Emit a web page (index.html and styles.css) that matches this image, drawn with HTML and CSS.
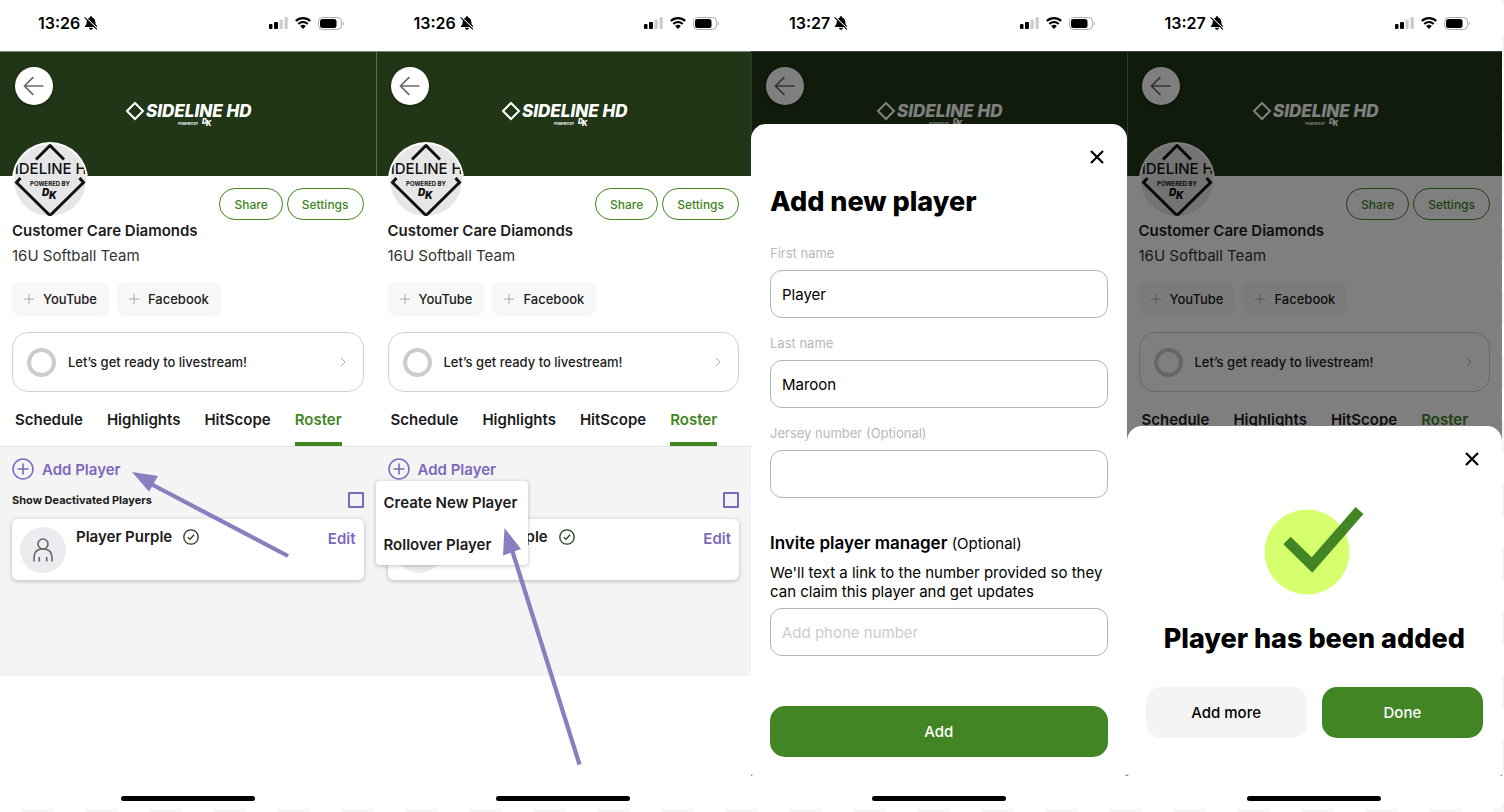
FILE: index.html
```html
<!DOCTYPE html>
<html lang="en">
<head>
    <meta charset="UTF-8">
    <meta name="viewport" content="width=device-width, initial-scale=1.0">
    <title>Add a Player to the Roster</title>
    <link rel="stylesheet" href="styles.css">
</head>
<body>

    <svg class="clip-defs" aria-hidden="true">
        <clipPath id="team-clip"><circle cx="38" cy="38" r="36"/></clipPath>
    </svg>

    <!-- Shared icons -->
    <svg class="icon-defs" aria-hidden="true">
        <symbol id="icon-bell" viewBox="0 0 14 14">
            <path d="M7 .3c-.7 0-1.200.5-1.200 1.100C3.700 2 2.700 3.700 2.700 5.700c0 2.600-.9 3.300-1.700 4.300-.4.500 0 1 .5 1h11c.5 0 .9-.5.5-1-.8-1-1.700-1.700-1.700-4.300 0-2-1-3.700-3.100-4.300 0-.6-.5-1.100-1.200-1.100zM5 11.700a2 2 0 0 0 4 0z" fill="#000"/>
            <path d="M1.500 1.200L13.500 12.700" stroke="#fff" stroke-width="1.200"/>
            <path d="M.6 1.300L12.900 13.300" stroke="#000" stroke-width="1.100"/>
        </symbol>
        <symbol id="icon-signal" viewBox="0 0 19 12">
            <rect x="0" y="7" width="3.500" height="5" rx="1" fill="#000"/>
            <rect x="5" y="5" width="4" height="7" rx="1" fill="#000"/>
            <rect x="10.500" y="2.500" width="3.200" height="9.500" rx="1" fill="#ccc"/>
            <rect x="15.500" y="0" width="3.300" height="12" rx="1" fill="#ccc"/>
        </symbol>
        <symbol id="icon-wifi" viewBox="0 0 16 12">
            <path d="M.8 4.100a10.200 10.200 0 0 1 14.400 0M3.300 6.900a6.700 6.700 0 0 1 9.400 0" fill="none" stroke="#000" stroke-width="2.100"/>
            <path d="M5.200 9a4 4 0 0 1 5.600 0L8 11.900z" fill="#000"/>
        </symbol>
        <symbol id="icon-battery" viewBox="0 0 26 13">
            <rect x=".5" y=".5" width="23" height="12" rx="4" fill="none" stroke="#aaa"/>
            <rect x="2" y="2" width="16.500" height="9" rx="2.500" fill="#000"/>
            <path d="M24.700 4.500c1.400.5 1.400 3.500 0 4z" fill="#aaa"/>
        </symbol>
        <symbol id="icon-back" viewBox="0 0 22 20">
            <path d="M20.500 10H1.500M10.300 1.200L1.500 10l8.800 8.800" fill="none" stroke="#6b6b6b" stroke-width="1.700"/>
        </symbol>
        <symbol id="brand-logo" viewBox="0 0 126 28">
            <path d="M9 2L17 10 9 18 1 10z" fill="none" stroke="#fff" stroke-width="2"/>
            <text x="20" y="16" class="logo-word">SIDELINE HD</text>
            <text x="52" y="24" class="logo-powered">POWERED BY</text>
            <text x="76" y="23" class="logo-dk">D</text>
            <text x="80" y="25" class="logo-dk">K</text>
        </symbol>
        <symbol id="team-logo" viewBox="0 0 76 76">
            <circle cx="38" cy="38" r="38" fill="#fff"/>
            <circle cx="38" cy="38" r="36" fill="#e6e6e6"/>
            <g clip-path="url(#team-clip)">
                <path d="M24 17.500L38 3.500l14 14M8.500 36L4.500 40.500 38 73.500 71.500 40.500 67.500 36" fill="none" stroke="#111" stroke-width="3"/>
                <text x="-7" y="32" class="team-word">SIDELINE HD</text>
                <text x="38" y="44" class="team-powered">POWERED BY</text>
                <text x="30" y="54" class="team-dk">D</text>
                <text x="37" y="57" class="team-dk">K</text>
            </g>
        </symbol>
        <symbol id="icon-plus" viewBox="0 0 10 10">
            <path d="M5 0v10M0 5h10" stroke="#aaa" stroke-width="1"/>
        </symbol>
        <symbol id="icon-chevron" viewBox="0 0 6 10">
            <path d="M1 1l4 4-4 4" fill="none" stroke="#aaa" stroke-width="1"/>
        </symbol>
        <symbol id="icon-add" viewBox="0 0 22 22">
            <path d="M11 5.500v11M5.500 11h11" stroke="#7c68bd" stroke-width="1.600"/>
            <circle cx="11" cy="11" r="10" fill="none" stroke="#7c68bd" stroke-width="1.500"/>
        </symbol>
        <symbol id="icon-person" viewBox="0 0 46 46">
            <circle cx="23" cy="23" r="23" fill="#ebebf0"/>
            <circle cx="23" cy="17" r="5" fill="none" stroke="#666" stroke-width="1.600"/>
            <path d="M14 34.500v-4c0-5 3-8.500 9-8.500s9 3.500 9 8.500v4M19.300 30v4.500M26.700 30v4.500" fill="none" stroke="#666" stroke-width="1.600"/>
        </symbol>
        <symbol id="icon-verified" viewBox="0 0 16 16">
            <circle cx="8" cy="8" r="7.200" fill="none" stroke="#223817" stroke-width="1.300"/>
            <path d="M4.800 8.300l2.200 2.100 4-4.600" fill="none" stroke="#223817" stroke-width="1.300"/>
        </symbol>
        <symbol id="icon-close" viewBox="0 0 14 14">
            <path d="M1 1l12 12M13 1L1 13" stroke="#000" stroke-width="2.200"/>
        </symbol>
    </svg>

    <main class="phones">

        <!-- Step 1: roster tab -->
        <section class="phone">
            <div class="status-bar">
                <span class="time">13:26</span>
                <svg class="bell"><use href="#icon-bell"/></svg>
                <svg class="signal"><use href="#icon-signal"/></svg>
                <svg class="wifi"><use href="#icon-wifi"/></svg>
                <svg class="battery"><use href="#icon-battery"/></svg>
            </div>
            <div class="screen">
                <header class="hero">
                    <button class="back-btn" aria-label="Back"><svg><use href="#icon-back"/></svg></button>
                    <svg class="brand"><use href="#brand-logo"/></svg>
                </header>
                <div class="profile">
                    <svg class="avatar"><use href="#team-logo"/></svg>
                    <div class="profile-actions">
                        <button class="pill">Share</button>
                        <button class="pill">Settings</button>
                    </div>
                </div>
                <div class="team">
                    <h2>Customer Care Diamonds</h2>
                    <p>16U Softball Team</p>
                    <div class="chips">
                        <button class="chip"><svg><use href="#icon-plus"/></svg>YouTube</button>
                        <button class="chip"><svg><use href="#icon-plus"/></svg>Facebook</button>
                    </div>
                    <a class="ready" href="#livestream"><span class="ring"></span>Let’s get ready to livestream!<svg><use href="#icon-chevron"/></svg></a>
                </div>
                <nav class="tabs">
                    <a href="#schedule">Schedule</a>
                    <a href="#highlights">Highlights</a>
                    <a href="#hitscope">HitScope</a>
                    <a class="active" href="#roster">Roster</a>
                </nav>
                <div class="roster">
                    <button class="add-player"><svg><use href="#icon-add"/></svg>Add Player</button>
                    <div class="deactivated">
                        <label for="deactivated1">Show Deactivated Players</label>
                        <input type="checkbox" id="deactivated1">
                    </div>
                    <div class="player">
                        <svg class="player-photo"><use href="#icon-person"/></svg>
                        <span class="player-name">Player Purple</span>
                        <svg class="verified"><use href="#icon-verified"/></svg>
                        <a class="edit" href="#edit">Edit</a>
                    </div>
                </div>
                <svg class="arrow arrow-add" viewBox="0 0 158 86">
                    <path d="M19 12L156 84" stroke="#8b7dbf" stroke-width="4.200"/>
                    <path d="M0 0l26 4-9 15.500z" fill="#8b7dbf"/>
                </svg>
            </div>
            <div class="home-bar"></div>
        </section>

        <!-- Step 2: add player menu -->
        <section class="phone">
            <div class="status-bar">
                <span class="time">13:26</span>
                <svg class="bell"><use href="#icon-bell"/></svg>
                <svg class="signal"><use href="#icon-signal"/></svg>
                <svg class="wifi"><use href="#icon-wifi"/></svg>
                <svg class="battery"><use href="#icon-battery"/></svg>
            </div>
            <div class="screen">
                <header class="hero">
                    <button class="back-btn" aria-label="Back"><svg><use href="#icon-back"/></svg></button>
                    <svg class="brand"><use href="#brand-logo"/></svg>
                </header>
                <div class="profile">
                    <svg class="avatar"><use href="#team-logo"/></svg>
                    <div class="profile-actions">
                        <button class="pill">Share</button>
                        <button class="pill">Settings</button>
                    </div>
                </div>
                <div class="team">
                    <h2>Customer Care Diamonds</h2>
                    <p>16U Softball Team</p>
                    <div class="chips">
                        <button class="chip"><svg><use href="#icon-plus"/></svg>YouTube</button>
                        <button class="chip"><svg><use href="#icon-plus"/></svg>Facebook</button>
                    </div>
                    <a class="ready" href="#livestream"><span class="ring"></span>Let’s get ready to livestream!<svg><use href="#icon-chevron"/></svg></a>
                </div>
                <nav class="tabs">
                    <a href="#schedule">Schedule</a>
                    <a href="#highlights">Highlights</a>
                    <a href="#hitscope">HitScope</a>
                    <a class="active" href="#roster">Roster</a>
                </nav>
                <div class="roster">
                    <button class="add-player"><svg><use href="#icon-add"/></svg>Add Player</button>
                    <div class="add-menu">
                        <button>Create New Player</button>
                        <button>Rollover Player</button>
                    </div>
                    <div class="deactivated">
                        <label for="deactivated2">Show Deactivated Players</label>
                        <input type="checkbox" id="deactivated2">
                    </div>
                    <div class="player">
                        <svg class="player-photo"><use href="#icon-person"/></svg>
                        <span class="player-name">Player Purple</span>
                        <svg class="verified"><use href="#icon-verified"/></svg>
                        <a class="edit" href="#edit">Edit</a>
                    </div>
                </div>
                <svg class="arrow arrow-menu" viewBox="0 0 80 238">
                    <path d="M9 22L76.500 236.500" stroke="#8b7dbf" stroke-width="4.200"/>
                    <path d="M1.500 0l16.500 21-18 6.500z" fill="#8b7dbf"/>
                </svg>
            </div>
            <div class="home-bar"></div>
        </section>

        <!-- Step 3: new player form -->
        <section class="phone">
            <div class="status-bar">
                <span class="time">13:27</span>
                <svg class="bell"><use href="#icon-bell"/></svg>
                <svg class="signal"><use href="#icon-signal"/></svg>
                <svg class="wifi"><use href="#icon-wifi"/></svg>
                <svg class="battery"><use href="#icon-battery"/></svg>
            </div>
            <div class="screen">
                <header class="hero">
                    <button class="back-btn" aria-label="Back"><svg><use href="#icon-back"/></svg></button>
                    <svg class="brand"><use href="#brand-logo"/></svg>
                </header>
                <div class="backdrop">
                    <form class="sheet">
                        <button type="button" class="close-btn" aria-label="Close"><svg><use href="#icon-close"/></svg></button>
                        <h1>Add new player</h1>
                        <div class="field">
                            <label for="firstName">First name</label>
                            <input type="text" id="firstName" value="Player">
                        </div>
                        <div class="field">
                            <label for="lastName">Last name</label>
                            <input type="text" id="lastName" value="Maroon">
                        </div>
                        <div class="field">
                            <label for="jersey">Jersey number (Optional)</label>
                            <input type="text" id="jersey">
                        </div>
                        <div class="invite">
                            <label for="phone"><strong>Invite player manager</strong> (Optional)</label>
                            <p>We'll text a link to the number provided so they can claim this player and get updates</p>
                            <input type="tel" id="phone" placeholder="Add phone number">
                        </div>
                        <button type="button" class="btn btn-green">Add</button>
                    </form>
                </div>
            </div>
            <div class="home-bar"></div>
        </section>

        <!-- Step 4: confirmation -->
        <section class="phone">
            <div class="status-bar">
                <span class="time">13:27</span>
                <svg class="bell"><use href="#icon-bell"/></svg>
                <svg class="signal"><use href="#icon-signal"/></svg>
                <svg class="wifi"><use href="#icon-wifi"/></svg>
                <svg class="battery"><use href="#icon-battery"/></svg>
            </div>
            <div class="screen">
                <header class="hero">
                    <button class="back-btn" aria-label="Back"><svg><use href="#icon-back"/></svg></button>
                    <svg class="brand"><use href="#brand-logo"/></svg>
                </header>
                <div class="profile">
                    <svg class="avatar"><use href="#team-logo"/></svg>
                    <div class="profile-actions">
                        <button class="pill">Share</button>
                        <button class="pill">Settings</button>
                    </div>
                </div>
                <div class="team">
                    <h2>Customer Care Diamonds</h2>
                    <p>16U Softball Team</p>
                    <div class="chips">
                        <button class="chip"><svg><use href="#icon-plus"/></svg>YouTube</button>
                        <button class="chip"><svg><use href="#icon-plus"/></svg>Facebook</button>
                    </div>
                    <a class="ready" href="#livestream"><span class="ring"></span>Let’s get ready to livestream!<svg><use href="#icon-chevron"/></svg></a>
                </div>
                <nav class="tabs">
                    <a href="#schedule">Schedule</a>
                    <a href="#highlights">Highlights</a>
                    <a href="#hitscope">HitScope</a>
                    <a class="active" href="#roster">Roster</a>
                </nav>
                <div class="backdrop">
                    <div class="sheet done-sheet">
                        <button class="close-btn" aria-label="Close"><svg><use href="#icon-close"/></svg></button>
                        <svg class="success" viewBox="0 0 100 88">
                            <circle cx="43" cy="45" r="42.500" fill="#d6ff6d"/>
                            <path d="M23 33.500l25 24.500L95.500 3.500" fill="none" stroke="#428524" stroke-width="10.500"/>
                        </svg>
                        <h1>Player has been added</h1>
                        <div class="btn-row">
                            <button class="btn btn-grey">Add more</button>
                            <button class="btn btn-green">Done</button>
                        </div>
                    </div>
                </div>
            </div>
            <div class="home-bar"></div>
        </section>

    </main>
</body>
</html>
```
FILE: styles.css
```css
* {
    box-sizing: border-box;
}

/* The dashed canvas shows along the right and bottom edges */
body {
    margin: 0;
    padding: 0 2px 3px 0;
    font-family: Inter, Arial, sans-serif;
    color: #1c1c1c;
    background:
        repeating-linear-gradient(to right, #fff 0 22px, #f6f6f6 22px 54px, #fff 54px 64px) left bottom / 100% 3px no-repeat,
        repeating-linear-gradient(to bottom, #f6f6f6 0 4px, #fff 4px 36px, #f6f6f6 36px 64px) right top / 2px 100% no-repeat,
        #fff;
}

button {
    font-family: inherit;
    border: none;
    background: none;
    padding: 0;
    color: inherit;
    cursor: pointer;
}

a {
    color: inherit;
    text-decoration: none;
}

h1, h2, p {
    margin: 0;
}

svg {
    display: block;
    flex: none;
}

.icon-defs {
    display: none;
}

.clip-defs {
    position: absolute;
    width: 0;
    height: 0;
}

.phones {
    display: grid;
    grid-template-columns: repeat(4, 1fr);
    min-height: calc(100vh - 3px);
}

.phone {
    display: flex;
    flex-direction: column;
    background: #fff;
    min-width: 0;
}

/* Status bar */
.status-bar {
    display: flex;
    align-items: center;
    height: 51px;
    padding: 0 32px 5px 38px;
    color: #000;
}

.time {
    font-size: 16px;
    font-weight: 600;
    margin-right: 4px;
}

.bell {
    width: 14px;
    height: 14px;
    margin-right: auto;
}

.signal {
    width: 19px;
    height: 12px;
}

.wifi {
    width: 16px;
    height: 12px;
    margin: 0 7px;
}

.battery {
    width: 26px;
    height: 13px;
}

.home-bar {
    height: 33px;
    padding-top: 20px;
}

.home-bar::before {
    content: "";
    display: block;
    width: 134px;
    height: 5px;
    margin: 0 auto;
    border-radius: 3px;
    background: #000;
}

/* Team page */
.screen {
    position: relative;
    flex: 1;
}

.hero {
    display: flex;
    height: 125px;
    padding: 15px;
    background: #213616;
    border-top: 1px solid #7c8676;
}

.phone + .phone .hero {
    border-left: 1px solid #5c6b54;
    padding-left: 14px;
}

.back-btn {
    display: flex;
    align-items: center;
    justify-content: center;
    width: 38px;
    height: 38px;
    border-radius: 50%;
    background: #fff;
    box-shadow: 0 1px 3px rgba(0, 0, 0, 0.4);
}

.back-btn svg {
    width: 22px;
    height: 20px;
}

.brand {
    width: 126px;
    height: 28px;
    margin: 34px auto 0 73px;
}

.logo-word {
    font-size: 17px;
    font-weight: 800;
    font-style: italic;
    fill: #fff;
}

.logo-powered {
    font-size: 3px;
    font-weight: 700;
    font-style: italic;
    fill: #fff;
}

.logo-dk {
    font-size: 7px;
    font-weight: 900;
    font-style: italic;
    fill: #fff;
}

.profile {
    display: flex;
    justify-content: space-between;
    align-items: flex-end;
    height: 44px;
    padding: 0 12px;
}

.avatar {
    width: 76px;
    height: 76px;
    margin-bottom: 2px;
}

.team-word {
    font-size: 15px;
    font-weight: 500;
    fill: #111;
}

.team-powered {
    font-size: 6px;
    font-weight: 700;
    text-anchor: middle;
    fill: #111;
}

.team-dk {
    font-size: 10px;
    font-weight: 900;
    font-style: italic;
    fill: #111;
}

.profile-actions {
    display: flex;
    gap: 4px;
}

.pill {
    height: 32px;
    padding: 0 14px;
    border: 1px solid #428524;
    border-radius: 16px;
    color: #428524;
    font-size: 12px;
    font-weight: 500;
}

.team {
    padding: 1px 12px 0;
}

.team h2 {
    font-size: 15px;
    line-height: 20px;
    font-weight: 600;
}

.team p {
    margin-top: 5px;
    font-size: 15px;
    line-height: 20px;
    color: #333;
}

.chips {
    display: flex;
    gap: 8px;
    margin-top: 16px;
}

.chip {
    display: flex;
    align-items: center;
    gap: 9px;
    height: 34px;
    padding: 0 12px;
    border-radius: 8px;
    background: #f7f7f7;
    font-size: 13px;
    font-weight: 500;
}

.chip svg {
    width: 10px;
    height: 10px;
}

.ready {
    display: flex;
    align-items: center;
    height: 60px;
    margin-top: 16px;
    padding: 0 17px 0 14px;
    border: 1px solid #d2d2d2;
    border-radius: 16px;
    font-size: 13px;
    font-weight: 500;
}

.ready svg {
    width: 6px;
    height: 10px;
    margin-left: auto;
}

.ring {
    width: 29px;
    height: 29px;
    margin-right: 12px;
    border: 4px solid #ccc;
    border-radius: 50%;
}

.tabs {
    display: flex;
    gap: 24px;
    padding: 0 15px;
    border-bottom: 1px solid #e4e4e4;
}

.tabs a {
    height: 54px;
    padding-top: 18px;
    font-size: 15px;
    line-height: 20px;
    font-weight: 600;
}

.tabs .active {
    color: #428524;
    border-bottom: 4px solid #428524;
}

/* Roster */
.roster {
    position: relative;
    height: 229px;
    padding: 11px 12px 0;
    background: #f4f4f4;
}

.add-player {
    display: flex;
    align-items: center;
    gap: 8px;
    color: #7c68bd;
    font-size: 15px;
    font-weight: 600;
}

.add-player svg {
    width: 22px;
    height: 22px;
}

.deactivated {
    display: flex;
    align-items: center;
    justify-content: space-between;
    height: 16px;
    margin-top: 12px;
    font-size: 11px;
    font-weight: 700;
}

.deactivated input {
    appearance: none;
    width: 16px;
    height: 16px;
    margin: 0;
    border: 2px solid #7c68bd;
    border-radius: 1px;
}

.player {
    display: flex;
    align-items: flex-start;
    height: 61px;
    margin-top: 11px;
    padding: 8px;
    border-radius: 6px;
    background: #fff;
    box-shadow: 0 1px 4px rgba(0, 0, 0, 0.25);
}

.player-photo {
    width: 46px;
    height: 46px;
}

.player-name {
    margin: 0 11px 0 10px;
    font-size: 15px;
    line-height: 20px;
    font-weight: 600;
}

.verified {
    width: 16px;
    height: 16px;
    margin-top: 2px;
}

.edit {
    margin: 2px 0 0 auto;
    color: #7c68bd;
    font-size: 15px;
    line-height: 20px;
    font-weight: 600;
}

.add-menu {
    position: absolute;
    left: 0;
    top: 34px;
    width: 152px;
    border-radius: 4px;
    background: #fff;
    box-shadow: 0 1px 4px rgba(0, 0, 0, 0.25);
}

.add-menu button {
    display: block;
    width: 100%;
    height: 42px;
    padding-left: 8px;
    font-size: 15px;
    font-weight: 600;
    text-align: left;
    white-space: nowrap;
}

.arrow {
    position: absolute;
}

.arrow-add {
    left: 132px;
    top: 421px;
    width: 158px;
    height: 86px;
}

.arrow-menu {
    left: 127px;
    top: 477px;
    width: 80px;
    height: 238px;
}

/* Bottom sheets */
.backdrop {
    position: absolute;
    inset: 0;
    display: flex;
    flex-direction: column;
    justify-content: flex-end;
    background: rgba(0, 0, 0, 0.5);
}

.sheet {
    display: flex;
    flex-direction: column;
    padding: 26px 19px 19px;
    border-radius: 15px 15px 3px 3px;
    background: #fff;
    color: #000;
}

.close-btn {
    align-self: flex-end;
    margin-right: 4px;
}

.close-btn svg {
    width: 14px;
    height: 14px;
}

.sheet h1 {
    font-size: 27px;
    line-height: 32px;
    font-weight: 800;
}

.close-btn + h1 {
    margin-top: 22px;
}

.field label {
    display: block;
    margin-bottom: 9px;
    color: #b8b8b8;
    font-size: 13px;
    line-height: 16px;
}

.sheet h1 + .field {
    margin-top: 27px;
}

.field + .field {
    margin-top: 17px;
}

.sheet input {
    display: block;
    width: 100%;
    height: 48px;
    padding: 0 11px;
    border: 1px solid #b4b4b4;
    border-radius: 12px;
    background: #fff;
    color: #000;
    font-family: inherit;
    font-size: 15px;
}

.sheet input::placeholder {
    color: #ccc;
}

.invite {
    margin: 36px 0 50px;
    font-size: 15px;
    line-height: 19px;
}

.invite strong {
    font-size: 17px;
    font-weight: 600;
}

.invite p {
    margin: 10px 0 7px;
}

.btn {
    height: 51px;
    border-radius: 15px;
    font-size: 15px;
    font-weight: 500;
}

.btn-green {
    background: #428524;
    color: #fff;
}

.btn-grey {
    background: #f4f4f4;
}

.done-sheet {
    padding-bottom: 38px;
}

.success {
    width: 100px;
    height: 88px;
    margin: 41px 0 28px 118px;
}

.done-sheet h1 {
    text-align: center;
}

.btn-row {
    display: grid;
    grid-template-columns: 1fr 1fr;
    gap: 15px;
    margin-top: 32px;
}
```
